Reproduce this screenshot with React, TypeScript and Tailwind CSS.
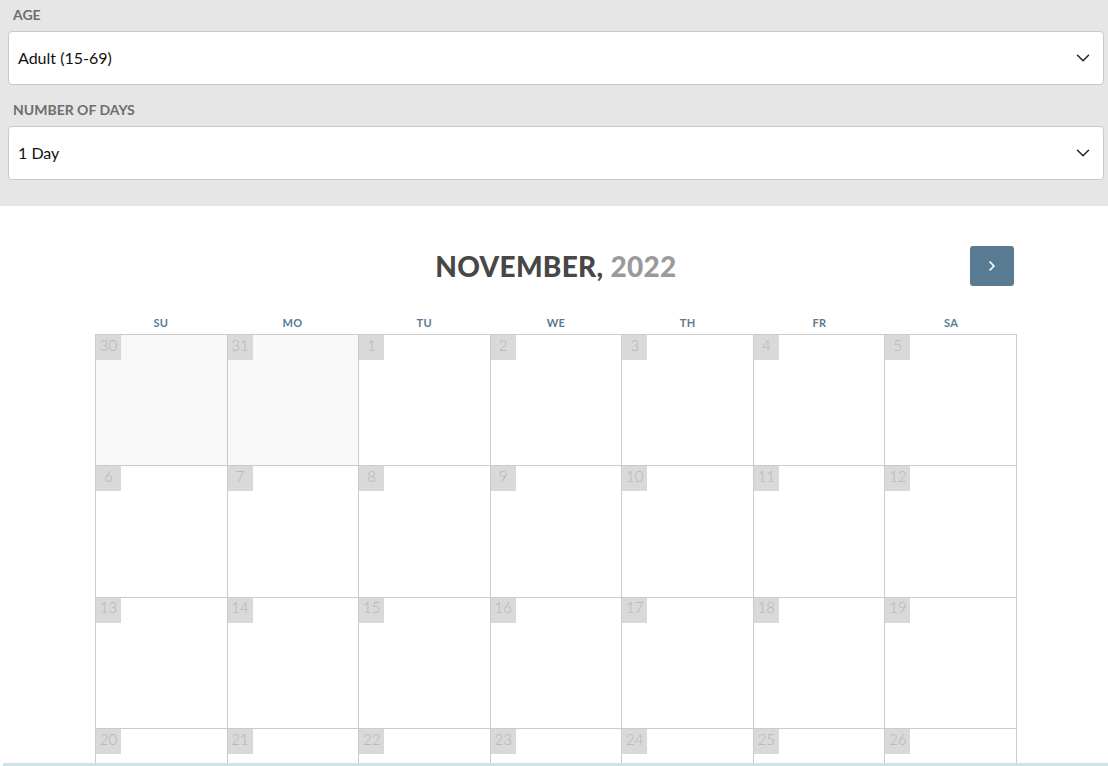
import { ChevronDown, ChevronRight } from "lucide-react";

const font = { fontFamily: "Lato, 'Noto Sans', sans-serif" };

const weekDays = ["SU", "MO", "TU", "WE", "TH", "FR", "SA"];

type Day = { n: number; prev?: boolean };

const weeks: Day[][] = [
  [{ n: 30, prev: true }, { n: 31, prev: true }, { n: 1 }, { n: 2 }, { n: 3 }, { n: 4 }, { n: 5 }],
  [6, 7, 8, 9, 10, 11, 12].map((n) => ({ n })),
  [13, 14, 15, 16, 17, 18, 19].map((n) => ({ n })),
  [20, 21, 22, 23, 24, 25, 26].map((n) => ({ n })),
];

function SelectField({ label, value }: { label: string; value: string }) {
  return (
    <div className="flex flex-col">
      <label className="text-[14px] font-bold text-[#6e6e6e] uppercase pl-[5px] h-[31px] pt-[5px] leading-[20px]">
        {label}
      </label>
      <div className="h-[54px] bg-white border border-[#c9c9c9] rounded-[4px] flex items-center justify-between pl-[9px] pr-[9px]">
        <span className="text-[16px] text-[#111]">{value}</span>
        <ChevronDown className="w-[22px] h-[22px] text-[#222]" strokeWidth={1.6} />
      </div>
    </div>
  );
}

export default function App() {
  return (
    <div className="w-[1108px] h-[766px] overflow-hidden bg-white" style={font}>
      <div className="bg-[#e6e6e6] pl-[8px] pr-[4px] flex flex-col gap-[10px] h-[206px]">
        <SelectField label="Age" value="Adult (15-69)" />
        <SelectField label="Number of Days" value="1 Day" />
      </div>

      <div className="w-[922px] ml-[95px] pt-[40px]">
        <div className="grid grid-cols-[1fr_auto_1fr] items-center h-[40px]">
          <div />
          <h1 className="text-[28px] font-black leading-none tracking-[0.3px]">
            <span className="text-[#474747]">NOVEMBER,</span>{" "}
            <span className="text-[#9a9a9a]">2022</span>
          </h1>
          <div className="flex justify-end pr-[3px]">
            <button className="w-[44px] h-[40px] rounded-[3px] bg-[#587a93] flex items-center justify-center text-white">
              <ChevronRight className="w-[16px] h-[16px]" strokeWidth={2.6} />
            </button>
          </div>
        </div>

        <div className="grid grid-cols-7 mt-[27px] h-[21px] items-center">
          {weekDays.map((d) => (
            <div key={d} className="text-center text-[11px] font-bold text-[#587a93] tracking-[0.3px]">
              {d}
            </div>
          ))}
        </div>

        <div className="grid grid-cols-7 border-l border-t border-[#cbcbcb]">
          {weeks.flat().map((d, i) => (
            <div
              key={i}
              className={`h-[131.3px] border-r border-b border-[#cbcbcb] ${d.prev ? "bg-[#f8f8f8]" : "bg-white"}`}
            >
              <div className="w-[25px] h-[25px] bg-[#d9d9d9] text-[#b5b5b5] text-[15px] font-light flex items-center justify-center pb-[5px]">
                {d.n}
              </div>
            </div>
          ))}
        </div>
      </div>

      <div className="fixed left-[3px] right-0 bottom-0 h-[3px] bg-[#cfe3e8]" />
    </div>
  );
}
